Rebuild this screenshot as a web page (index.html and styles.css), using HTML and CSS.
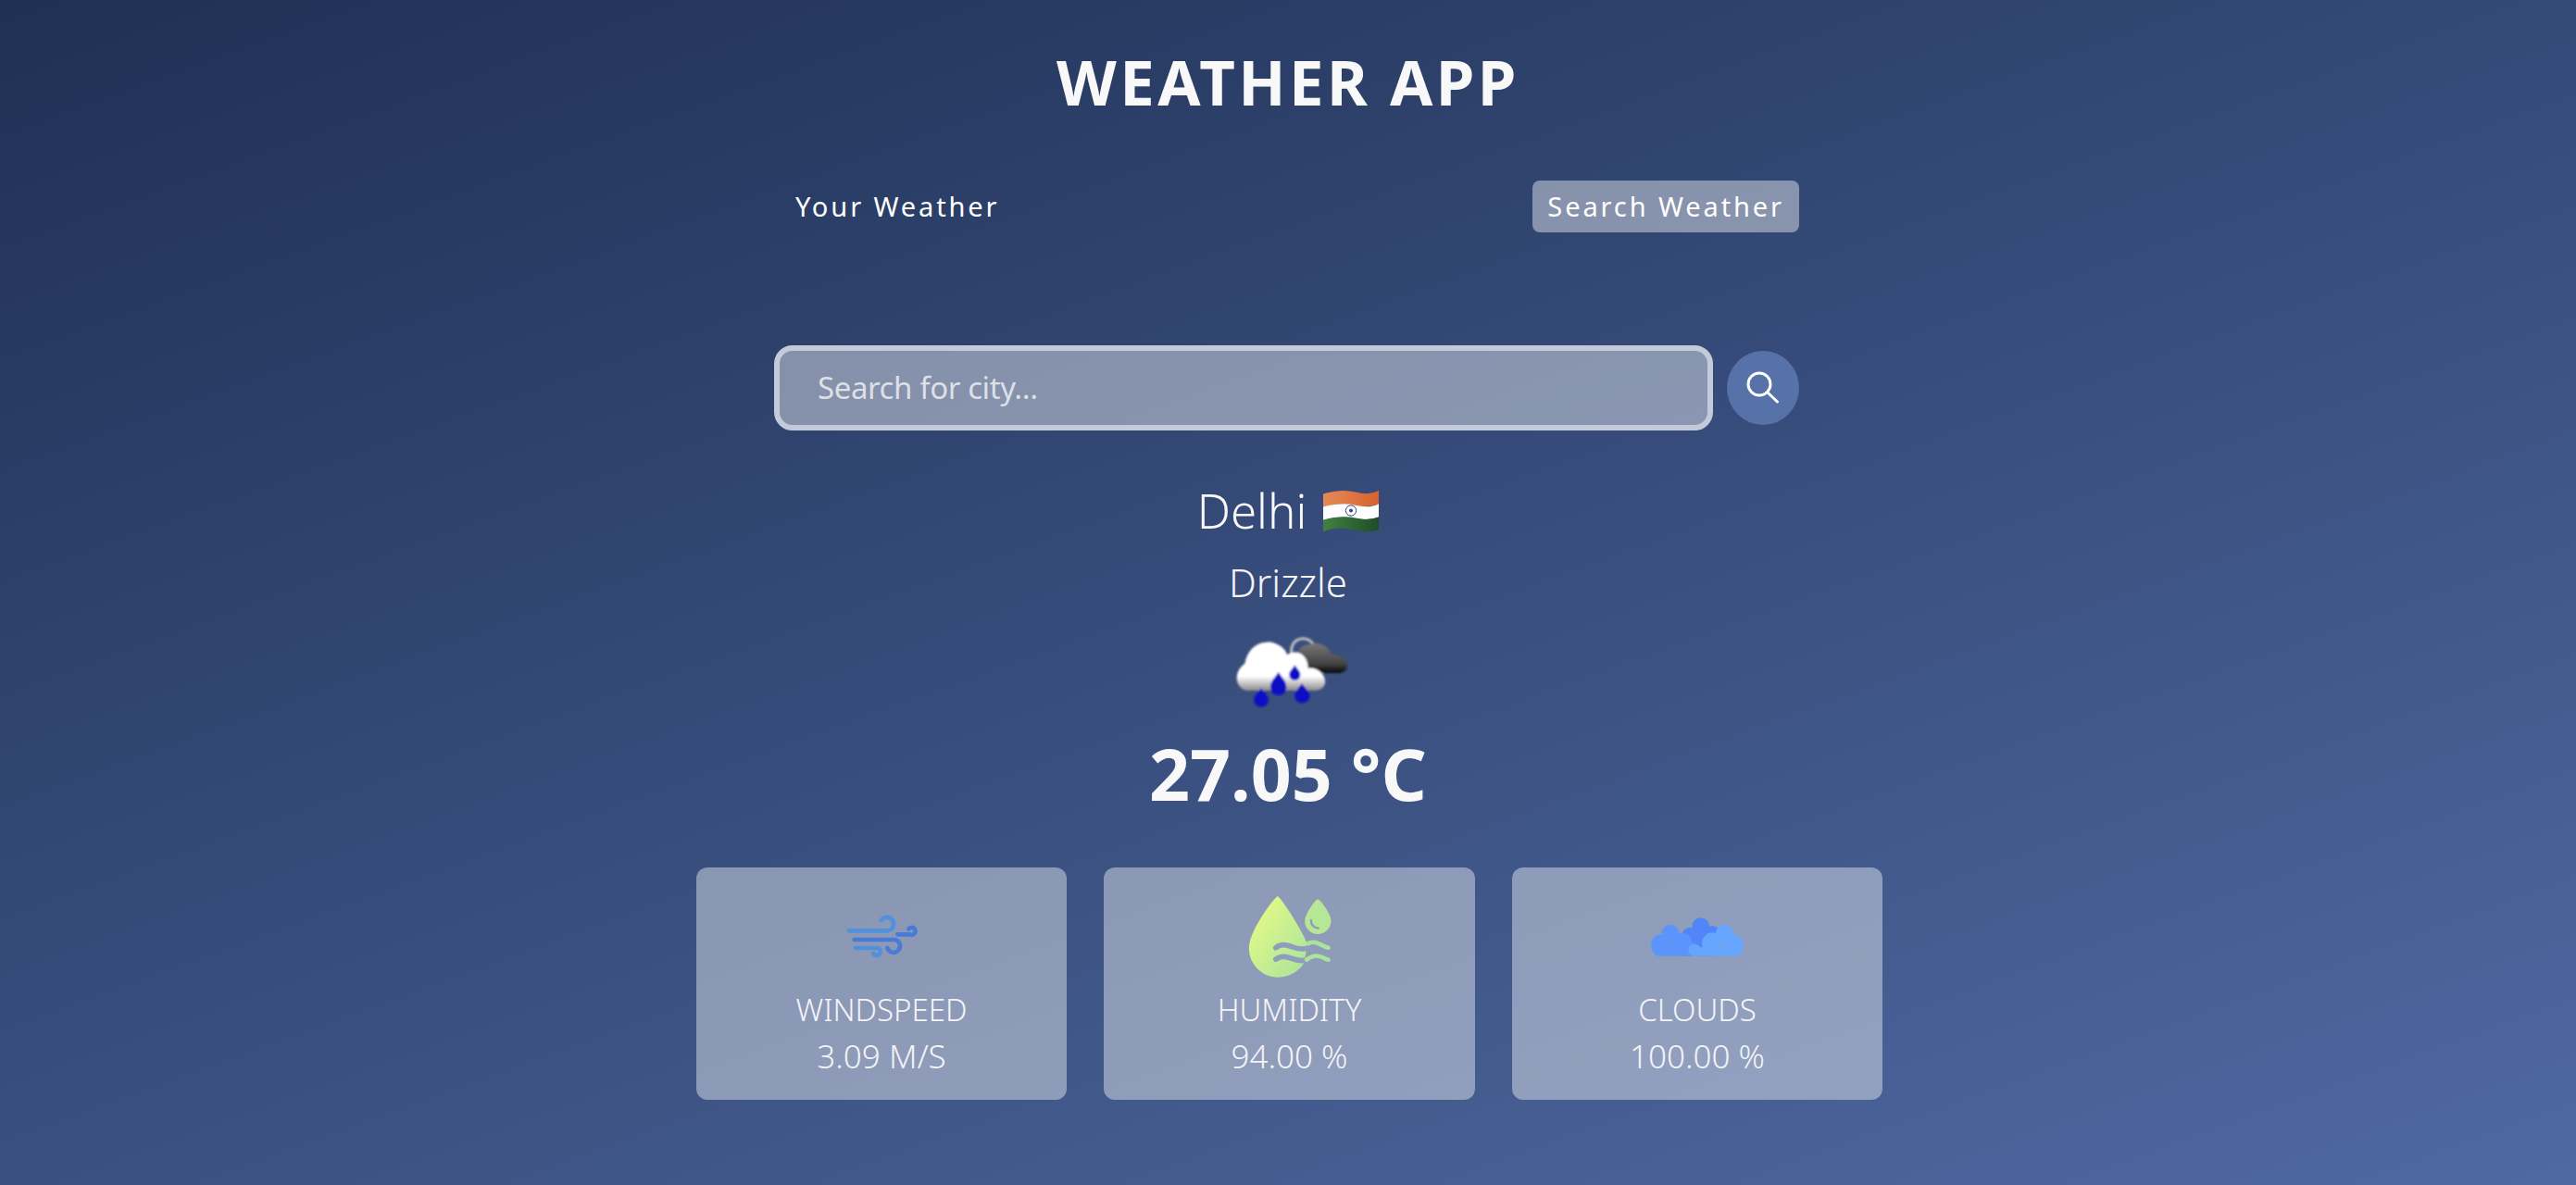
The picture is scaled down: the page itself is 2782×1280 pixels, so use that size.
FILE: index.html
```html
<!DOCTYPE html>
<html lang="en">
<head>
<meta charset="utf-8">
<title>Weather App</title>
<link rel="stylesheet" href="styles.css">
</head>
<body>
<main class="app">
  <h1 class="title">WEATHER APP</h1>
  <nav class="tabs">
    <span class="tab">Your Weather</span>
    <span class="tab tab-active">Search Weather</span>
  </nav>
  <form class="search">
    <input class="search-input" type="text" placeholder="Search for city...">
    <button class="search-btn" type="button" aria-label="Search">
      <svg class="search-icon" viewBox="0 0 36 36"><circle cx="14" cy="14" r="12" fill="none" stroke="#fff" stroke-width="3"/><path d="M23 23 L33.500 33" fill="none" stroke="#fff" stroke-width="3" stroke-linecap="round"/></svg>
    </button>
  </form>
  <section class="weather">
    <div class="city">
      <span>Delhi</span>
      <svg class="flag" viewBox="630 90 180 140">
        <defs>
          <linearGradient id="fo" x1="0" x2="1"><stop offset="0" stop-color="#e58a55"/><stop offset="1" stop-color="#d9622e"/></linearGradient>
          <linearGradient id="fg" x1="0" x2="1"><stop offset="0" stop-color="#42813f"/><stop offset="1" stop-color="#1f4d28"/></linearGradient>
        </defs>
        <path d="M630 106 Q690 88 735 100 T810 95 V140 Q770 152 725 142 T630 150 Z" fill="url(#fo)"/>
        <path d="M630 148 Q690 132 735 143 T810 138 V182 Q770 194 725 185 T630 192 Z" fill="#fff"/>
        <path d="M630 190 Q690 174 735 184 T810 180 V222 Q770 234 725 222 T630 228 Z" fill="url(#fg)"/>
        <circle cx="720" cy="160" r="17" fill="none" stroke="#3a3f8f" stroke-width="3"/>
        <circle cx="720" cy="160" r="6" fill="#3a3f8f"/>
      </svg>
    </div>
    <div class="condition">Drizzle</div>
    <svg class="weather-icon" viewBox="317 540 396 270">
      <defs>
        <filter id="soft"><feGaussianBlur stdDeviation="3"/></filter>
        <linearGradient id="wc" x1="0" y1="0" x2="0" y2="1"><stop offset="0.7" stop-color="#fff"/><stop offset="1" stop-color="#8a8a8a"/></linearGradient>
        <linearGradient id="gc" x1="0" y1="0" x2="0" y2="1"><stop offset="0" stop-color="#777"/><stop offset="0.7" stop-color="#444"/><stop offset="1" stop-color="#050505"/></linearGradient>
      </defs>
      <g filter="url(#soft)">
        <path d="M530 625 A37 37 0 0 1 598 590" fill="none" stroke="#bdbdbd" stroke-width="9"/>
        <path d="M560 652 C535 630 545 590 585 588 C610 578 645 590 655 620 C690 620 715 640 705 665 C700 678 690 680 675 680 H590 Z" fill="url(#gc)"/>
        <path d="M380 738 C345 730 335 680 375 650 C385 600 420 575 465 582 C495 590 510 610 512 622 C545 600 580 625 580 665 C620 662 645 700 632 722 C625 735 610 738 600 738 Z" fill="url(#wc)"/>
        <path d="M537 655 C545 668 555 675 555 686 C555 710 519 710 519 686 C519 675 529 668 537 655 Z" fill="#1010c4"/>
        <path d="M484 678 C495 695 510 708 510 726 C510 762 458 762 458 726 C458 708 473 695 484 678 Z" fill="#1010c4"/>
        <path d="M560 715 C570 730 585 740 585 755 C585 785 537 785 537 755 C537 740 550 730 560 715 Z" fill="#1010c4"/>
        <path d="M428 730 C438 745 452 755 452 768 C452 798 405 798 405 768 C405 755 418 745 428 730 Z" fill="#1010c4"/>
      </g>
    </svg>
    <div class="temp">27.05 °C</div>
  </section>
  <section class="cards">
    <article class="card">
      <svg class="card-icon" viewBox="486 132 300 288" fill="none" stroke-width="14" stroke-linecap="round">
        <path d="M531 256 H650 A22 22 0 1 0 635 222" stroke="#5090dc"/>
        <path d="M548 285 H670 A21 21 0 1 1 655 312" stroke="#4a7ad8"/>
        <path d="M552 312 H618 A12 12 0 1 1 610 330" stroke="#5090dc"/>
        <path d="M688 268 H728 A12 12 0 1 0 724 250" stroke="#4a7ad8"/>
      </svg>
      <div class="label">WINDSPEED</div>
      <div class="value">3.09 M/S</div>
    </article>
    <article class="card card-wide">
      <svg class="card-icon" viewBox="487.500 132 300 288">
        <defs>
          <linearGradient id="hd" x1="0" y1="0" x2="1" y2="1"><stop offset="0.1" stop-color="#e6fb85"/><stop offset="1" stop-color="#a6e29e"/></linearGradient>
        </defs>
        <path d="M598 145 C590 145 505 255 505 312 C505 365 548 407 598 407 C640 407 670 385 685 358 L694 300 C675 250 606 145 598 145 Z" fill="url(#hd)"/>
        <path d="M592 311 C625 285 655 325 690 313 M592 349 C625 323 655 363 690 351" fill="none" stroke="#8e9dbb" stroke-width="17" stroke-linecap="round"/>
        <path d="M698 297 C725 285 735 305 762 311 M692 350 C722 328 735 340 762 350" fill="none" stroke="#a9e39c" stroke-width="14" stroke-linecap="round"/>
        <path d="M728 154 C722 154 686 200 686 225 C686 250 706 267 728 267 C750 267 771 250 771 225 C771 200 734 154 728 154 Z" fill="#b5e796"/>
        <path d="M706 222 C706 238 716 246 730 248" fill="none" stroke="#8e9dbb" stroke-width="7" stroke-linecap="round"/>
      </svg>
      <div class="label">HUMIDITY</div>
      <div class="value">94.00 %</div>
    </article>
    <article class="card">
      <svg class="card-icon" viewBox="489 132 300 288">
        <g fill="#5285fa">
          <circle cx="650" cy="242" r="28"/><circle cx="615" cy="272" r="26"/><circle cx="688" cy="266" r="26"/><rect x="600" y="260" width="100" height="78"/>
        </g>
        <g fill="#5b95fc">
          <circle cx="552" cy="264" r="28"/><circle cx="522" cy="300" r="32"/><circle cx="590" cy="296" r="32"/><path d="M490 300 C490 320 498 338 515 338 H635 V296 H490 Z"/>
        </g>
        <g fill="#65a5fe">
          <circle cx="727" cy="264" r="28"/><circle cx="757" cy="300" r="32"/><circle cx="688" cy="296" r="34"/><circle cx="630" cy="319" r="20"/><path d="M789 300 C789 320 781 338 764 338 H630 V310 H789 Z"/>
        </g>
      </svg>
      <div class="label">CLOUDS</div>
      <div class="value">100.00 %</div>
    </article>
  </section>
</main>
</body>
</html>
```
FILE: styles.css
```css
* { box-sizing: border-box; }
html, body { margin: 0; height: 100%; }
body {
  width: 100%;
  min-height: 1280px;
  overflow: hidden;
  background: linear-gradient(160deg, #1f3054 0%, #4f69a2 100%);
  color: #fff;
  font-family: "Noto Sans", "Open Sans", sans-serif;
}
.app {
  display: flex;
  flex-direction: column;
  align-items: center;
  padding-top: 46px;
}
.title {
  margin: 0;
  font-size: 67px;
  line-height: 84px;
  font-weight: 700;
  letter-spacing: 3.400px;
  color: #f8f8f8;
}
.tabs {
  display: flex;
  justify-content: space-between;
  width: 1107px;
  margin-top: 65px;
  margin-right: 3px;
}
.tab {
  height: 56px;
  padding: 0 16px 2px;
  margin-left: 7px;
  display: flex;
  align-items: center;
  border-radius: 8px;
  font-size: 29px;
  letter-spacing: 2.900px;
}
.tab-active {
  background: rgba(255, 255, 255, 0.42);
  margin-left: 0;
}
.search {
  display: flex;
  align-items: center;
  gap: 15px;
  width: 1107px;
  margin-top: 122px;
  margin-right: 3px;
}
.search-input {
  width: 1014px;
  height: 92px;
  padding: 0 41px 2px;
  border: 6px solid #c3cad9;
  border-radius: 20px;
  background: rgba(255, 255, 255, 0.42);
  color: #fff;
  font: 400 33px "Noto Sans", sans-serif;
  letter-spacing: -0.400px;
  outline: none;
}
.search-input::placeholder { color: rgba(255, 255, 255, 0.72); }
.search-btn {
  display: flex;
  align-items: center;
  justify-content: center;
  width: 78px;
  height: 80px;
  padding: 0;
  border: 0;
  border-radius: 50%;
  background: #5672a9;
}
.search-icon { width: 36px; height: 36px; }
.weather {
  display: flex;
  flex-direction: column;
  align-items: center;
  margin-top: 51px;
}
.city {
  display: flex;
  align-items: center;
  gap: 18px;
  height: 70px;
  font-size: 51px;
  font-weight: 350;
  color: #f8f8f8;
}
.flag { width: 60px; height: 47px; }
.condition {
  margin-top: 15px;
  height: 56px;
  line-height: 56px;
  font-size: 42px;
  font-weight: 350;
  color: #f4f4f6;
}
.weather-icon {
  display: block;
  width: 132px;
  height: 90px;
  margin-top: 23px;
}
.temp {
  margin-top: 18px;
  height: 96px;
  line-height: 96px;
  font-size: 77px;
  font-weight: 700;
  color: #f8f8f8;
}
.cards {
  display: flex;
  justify-content: center;
  gap: 40px;
  margin-top: 53px;
  margin-left: 3px;
}
.card {
  display: flex;
  flex-direction: column;
  align-items: center;
  width: 400px;
  height: 251px;
  padding-top: 27px;
  border-radius: 12px;
  background: rgba(255, 255, 255, 0.41);
}
.card-wide { width: 401px; }
.card-icon { display: block; width: 100px; height: 96px; }
.label {
  margin-top: 6px;
  height: 50px;
  line-height: 50px;
  font-size: 33px;
  font-weight: 350;
  color: #f4f4f6;
}
.value {
  height: 50px;
  line-height: 50px;
  font-size: 35px;
  font-weight: 350;
  color: #f4f4f6;
}
```
